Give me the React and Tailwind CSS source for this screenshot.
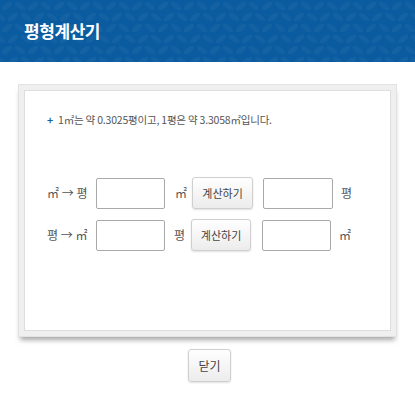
import React, { useState } from "react";

const font = { fontFamily: '"Noto Sans CJK KR", "Noto Sans", sans-serif' };

// leaf pattern drawn behind the header title
function LeafPattern() {
  return (
    <svg className="absolute inset-0 h-full w-full" aria-hidden="true">
      <defs>
        <pattern id="leaf" width="26" height="22" patternUnits="userSpaceOnUse">
          <ellipse cx="7" cy="6" rx="6" ry="2.6" transform="rotate(-35 7 6)" fill="#ffffff" fillOpacity="0.045" />
          <ellipse cx="20" cy="6" rx="6" ry="2.6" transform="rotate(35 20 6)" fill="#ffffff" fillOpacity="0.035" />
          <ellipse cx="13" cy="17" rx="6" ry="2.6" transform="rotate(-35 13 17)" fill="#ffffff" fillOpacity="0.04" />
          <ellipse cx="0" cy="17" rx="6" ry="2.6" transform="rotate(35 0 17)" fill="#ffffff" fillOpacity="0.035" />
          <ellipse cx="26" cy="17" rx="6" ry="2.6" transform="rotate(35 26 17)" fill="#ffffff" fillOpacity="0.035" />
        </pattern>
      </defs>
      <rect width="100%" height="100%" fill="url(#leaf)" />
    </svg>
  );
}

export default function App() {
  const [sqm, setSqm] = useState("");
  const [pyeongOut, setPyeongOut] = useState("");
  const [pyeong, setPyeong] = useState("");
  const [sqmOut, setSqmOut] = useState("");

  const calcPyeong = () => {
    const v = parseFloat(sqm);
    setPyeongOut(isNaN(v) ? "" : (v * 0.3025).toFixed(2));
  };

  const calcSqm = () => {
    const v = parseFloat(pyeong);
    setSqmOut(isNaN(v) ? "" : (v * 3.3058).toFixed(2));
  };

  const btn =
    "h-[32px] rounded-[3px] border border-[#cfcfcf] bg-gradient-to-b from-white to-[#ececec] text-[11px] text-[#444] shadow-[0_1px_2px_rgba(0,0,0,0.12)]";
  const input = "h-[31px] rounded-[2px] border border-[#a9a9a9] bg-white px-1 text-[12px] outline-none";

  return (
    <div className="min-h-[400px] w-[415px] bg-white" style={font}>
      {/* HEADER */}
      <div className="relative flex h-[62px] items-center overflow-hidden bg-[#0a5b9f] px-6">
        <LeafPattern />
        <h1 className="relative text-[17px] font-bold tracking-tight text-white">평형계산기</h1>
      </div>

      {/* BOX */}
      <div className="mx-[18px] mt-[22px] h-[253px] border border-[#e2e2e2] bg-[#efefef] p-[5px] shadow-[0_5px_5px_-2px_rgba(0,0,0,0.35)]">
        <div className="h-full border border-[#dedede] bg-white pl-[22px] pt-[21px]">
          <p className="flex items-center text-[10.5px] leading-4 tracking-[-0.2px] text-[#555]">
            <span className="mr-[5px] font-bold text-[#1d5fa0]">+</span>
            1㎡는 약 0.3025평이고, 1평은 약 3.3058㎡입니다.
          </p>

          <div className="mt-[49px] flex items-center text-[12px] text-[#555]">
            <span className="w-[49px]">㎡ → 평</span>
            <input className={`${input} w-[69px]`} value={sqm} onChange={(e) => setSqm(e.target.value)} />
            <span className="ml-[10px]">㎡</span>
            <button className={`${btn} ml-[5px] w-[61px]`} onClick={calcPyeong}>
              계산하기
            </button>
            <input className={`${input} ml-[10px] w-[70px]`} value={pyeongOut} readOnly />
            <span className="ml-[8px]">평</span>
          </div>

          <div className="mt-[10px] flex items-center text-[12px] text-[#555]">
            <span className="w-[49px]">평 → ㎡</span>
            <input className={`${input} w-[69px]`} value={pyeong} onChange={(e) => setPyeong(e.target.value)} />
            <span className="ml-[9px]">평</span>
            <button className={`${btn} ml-[6px] w-[60px]`} onClick={calcSqm}>
              계산하기
            </button>
            <input className={`${input} ml-[11px] w-[69px]`} value={sqmOut} readOnly />
            <span className="ml-[8px]">㎡</span>
          </div>
        </div>
      </div>

      {/* CLOSE */}
      <div className="mt-[12px] flex justify-center pl-[4px]">
        <button className={`${btn} h-[33px] w-[43px] text-[12px]`}>닫기</button>
      </div>
    </div>
  );
}
